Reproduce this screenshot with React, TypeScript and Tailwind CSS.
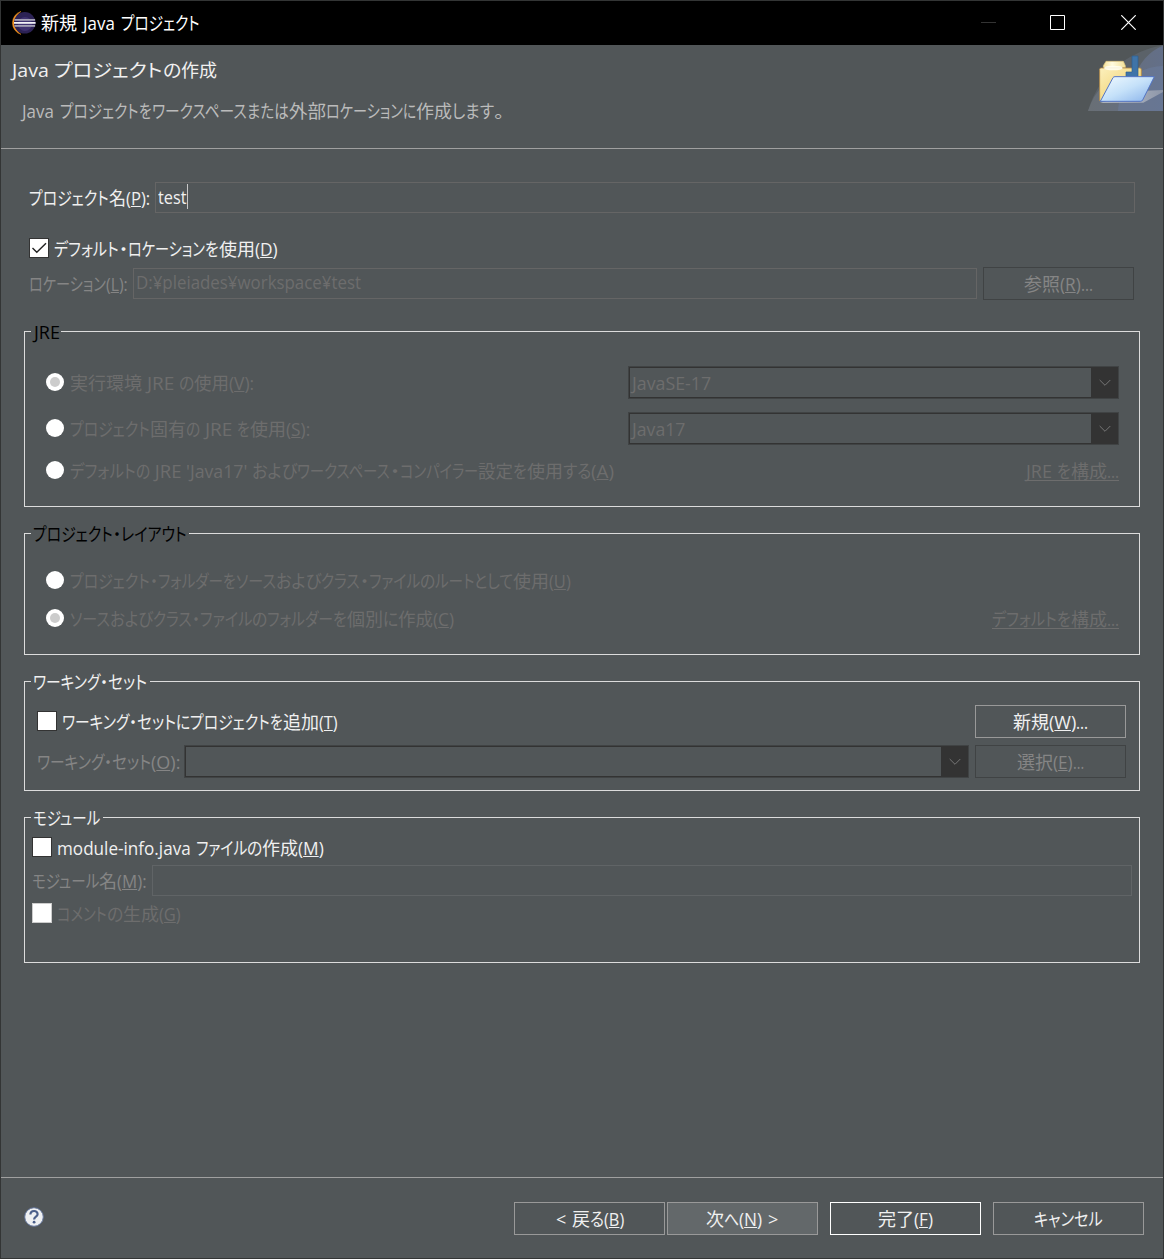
import React, { useLayoutEffect, useRef, useState } from "react";

type Part = [text: string, start: number];

function mnemonic(text: string) {
  const i = text.indexOf("_");
  if (i < 0) return text;
  return (
    <>
      {text.slice(0, i)}
      <span className="underline decoration-1 underline-offset-1">{text[i + 1]}</span>
      {text.slice(i + 2)}
    </>
  );
}

/* One run of glyphs condensed or widened to a given advance. */
function Run({ text, width }: { text: string; width: number }) {
  const ref = useRef<HTMLSpanElement>(null);
  const [scale, setScale] = useState(1);
  useLayoutEffect(() => {
    const measure = () => {
      if (ref.current && ref.current.offsetWidth) setScale(width / ref.current.offsetWidth);
    };
    measure();
    document.fonts?.ready.then(measure);
  }, [width, text]);
  return (
    <span className="inline-block shrink-0" style={{ width }}>
      <span
        ref={ref}
        className="inline-block origin-left whitespace-pre [font-feature-settings:'palt']"
        style={{ transform: `scaleX(${scale})` }}
      >
        {mnemonic(text)}
      </span>
    </span>
  );
}

function Label({ parts, end, className = "" }: { parts: Part[]; end: number; className?: string }) {
  return (
    <span className={`flex shrink-0 items-baseline leading-6 ${className}`}>
      {parts.map(([text, start], i) => (
        <Run key={i} text={text} width={(parts[i + 1]?.[1] ?? end) - start} />
      ))}
    </span>
  );
}

function Group({ title, titleWidth, className, children }: { title: React.ReactNode; titleWidth: string; className: string; children: React.ReactNode }) {
  return (
    <section className={`flex flex-col border-x border-b border-[#dcdcdc] ${className}`}>
      <div className="flex h-px shrink-0 items-start">
        <div className="h-px w-[6px] bg-[#dcdcdc]" />
        <div className={`-mt-[11px] pl-[2px] ${titleWidth}`}>{title}</div>
        <div className="h-px flex-1 bg-[#dcdcdc]" />
      </div>
      {children}
    </section>
  );
}

function Radio({ on, className = "" }: { on?: boolean; className?: string }) {
  return (
    <span className={`ml-px flex size-[18px] shrink-0 items-center justify-center rounded-full bg-white ${className}`}>
      {on && <span className="size-[10px] rounded-full bg-[#cccccc]" />}
    </span>
  );
}

function Checkbox({ on, disabled }: { on?: boolean; disabled?: boolean }) {
  return (
    <span className={`flex size-5 shrink-0 items-center justify-center border bg-white ${disabled ? "border-[#cccccc]" : "border-[#333333]"}`}>
      {on && (
        <svg width="18" height="18" viewBox="0 0 18 18" fill="none" stroke="#222" strokeWidth="1.4">
          <path d="M2.5 9 L6.8 13.3 L16 4.2" />
        </svg>
      )}
    </span>
  );
}

function Combo({ className, children }: { className: string; children?: React.ReactNode }) {
  return (
    <div className={`flex h-[33px] shrink-0 border border-[#404344] ${className}`}>
      <div className="flex flex-1 items-center border border-r-0 border-[#333333] pl-[2px] text-[#6d6d6d]">{children}</div>
      <div className="flex w-[27px] items-center justify-center bg-[#333333]">
        <svg width="12" height="8" viewBox="0 0 12 8" fill="none" stroke="#777" strokeWidth="1">
          <path d="M0.7 1 L6 6.3 L11.3 1" />
        </svg>
      </div>
    </div>
  );
}

function Button({ className, children }: { className: string; children: React.ReactNode }) {
  return <button className={`flex h-[33px] w-[151px] shrink-0 items-center border ${className}`}>{children}</button>;
}

function EclipseLogo() {
  return (
    <svg width="25" height="24" viewBox="0 0 25 24">
      <path d="M10 0.4 A12 12 0 0 0 10 23.4 A14 14 0 0 1 10 0.4Z" fill="#f7941e" stroke="#e08a20" strokeWidth=".5" />
      <circle cx="13.7" cy="11.8" r="10.8" fill="#2c2255" />
      <circle cx="14" cy="13" r="7" fill="#3f3270" />
      <path d="M3.4 8h20.7v1.8H3.4z" fill="#a3a0b4" />
      <path d="M3 11h21.6v1.8H3z" fill="#f2f2f6" />
      <path d="M3.4 14h20.7v1.8H3.4z" fill="#a3a0b4" />
    </svg>
  );
}

function FolderBanner() {
  return (
    <svg width="75" height="66" viewBox="384 135 225 198" className="shrink-0">
      <defs>
        <linearGradient id="tab" x1="0" y1="0" x2="1" y2="0">
          <stop offset="0" stopColor="#f7e39a" />
          <stop offset=".4" stopColor="#fffbe0" />
          <stop offset="1" stopColor="#f4e198" />
        </linearGradient>
        <linearGradient id="back" x1="0" y1="0" x2="1" y2="1">
          <stop offset="0" stopColor="#fcf0bd" />
          <stop offset="1" stopColor="#edc95b" />
        </linearGradient>
        <linearGradient id="front" x1="0" y1="0" x2="1" y2="1">
          <stop offset="0" stopColor="#f2fbff" />
          <stop offset=".5" stopColor="#c5e1f9" />
          <stop offset="1" stopColor="#87b1ea" />
        </linearGradient>
        <linearGradient id="glow" x1="0" y1="0" x2="1" y2="0">
          <stop offset="0" stopColor="#696f75" />
          <stop offset="1" stopColor="#636f88" />
        </linearGradient>
        <linearGradient id="shade" x1="0" y1="0" x2="1" y2="0">
          <stop offset="0" stopColor="#c8ccd4" />
          <stop offset="1" stopColor="#8d96a8" />
        </linearGradient>
      </defs>
      <path d="M384 333 Q410 245 480 190 Q540 148 609 135 V333Z" fill="#5b6269" />
      <path d="M384 333 Q400 285 430 256 L520 235 Q550 160 609 137 V333Z" fill="url(#glow)" />
      <path d="M474 333 Q478 250 535 218 Q570 198 609 198 V333Z" fill="#6c7b9d" fillOpacity=".55" />
      <path d="M420 308 L550 308 L609 276 V270 L560 272Z" fill="url(#shade)" />
      <path d="M430 203 V197 L438 184 H490 L496 197 V203Z" fill="url(#tab)" stroke="#dfc67c" strokeWidth="2" />
      <path d="M419 302 V208 Q419 204 424 204 H540 Q544 204 544 210 V302Z" fill="url(#back)" stroke="#b58a48" strokeWidth="2.5" />
      <ellipse cx="460" cy="204" rx="28" ry="7" fill="#fffef0" fillOpacity=".9" />
      <path d="M516 168 H534 V230 H498 V216 H516Z" fill="#3f74a8" stroke="#2a5d8e" strokeWidth="2" />
      <path d="M421 304 L459 233 Q461 230 465 230 H583 L548 300 Q546 304 541 304Z" fill="url(#front)" stroke="#5375c5" strokeWidth="3" />
    </svg>
  );
}

export default function App() {
  return (
    <div className="flex h-[1259px] w-[1164px] flex-col overflow-hidden border border-[#333535] bg-[#515658] font-['Open_Sans','Noto_Sans_CJK_JP',sans-serif] text-[18px] text-[#f0f0f0]">
      <header className="flex h-11 shrink-0 items-center bg-black pl-[10px] text-white">
        <EclipseLogo />
        <Label className="ml-[5px]" parts={[["新規", 41], [" ", 77], ["Java", 83], [" ", 115], ["プロジェクト", 121]]} end={200} />
        <div className="ml-auto flex items-center pr-[27px]">
          <svg width="15" height="15" viewBox="0 0 15 15" className="-mt-[2px] mr-[54px]"><path d="M0 7.5h15" stroke="#333" /></svg>
          <svg width="15" height="15" viewBox="0 0 15 15" className="-mt-px mr-[56px]"><path d="M.5 .5h14v14h-14z" fill="none" stroke="#fff" /></svg>
          <svg width="15" height="15" viewBox="0 0 15 15" className="-mt-px"><path d="M.3 .3l14.4 14.4M14.7 .3L.3 14.7" stroke="#fff" strokeWidth="1.2" /></svg>
        </div>
      </header>

      <div className="flex h-[104px] shrink-0 justify-between border-b border-[#a0a0a0]">
        <div className="pl-[11px] pt-[13px]">
          <Label parts={[["Java", 12], [" ", 49], ["プロジェクト", 54], ["の", 163], ["作成", 181]]} end={217} />
          <Label
            className="ml-[10px] mt-[17px] text-[#bbbbbb]"
            parts={[["Java", 22], [" ", 54], ["プロジェクト", 60], ["を", 139], ["ワークスペース", 152], ["または", 247], ["外部", 289], ["ロケーション", 326], ["に", 403], ["作成", 416], ["します", 452], ["。", 494]]}
            end={504}
          />
        </div>
        <FolderBanner />
      </div>

      <main className="flex flex-1 flex-col pl-[23px] pr-[23px] pt-[33px]">
        <div className="flex h-[31px] shrink-0 items-center pl-[5px] pr-[5px]">
          <Label parts={[["プロジェクト", 29], ["名", 109], ["(_P):", 126]]} end={150} />
          <div className="ml-[5px] flex h-[31px] flex-1 items-center border border-[#656565] pl-[2px]">
            <Label className="-mt-[1px]" parts={[["test", 158]]} end={187} />
            <span className="-mt-[3px] h-[25px] w-px bg-[#c8c8c8]" />
          </div>
        </div>

        <div className="mt-[25px] flex h-5 shrink-0 items-center pl-[5px]">
          <Checkbox on />
          <Label className="ml-[5px] pt-[2px]" parts={[["デフォルト", 54], ["・", 119], ["ロケーション", 128], ["を", 205], ["使用", 219], ["(_D)", 255]]} end={278} />
        </div>

        <div className="mt-[9px] flex h-[33px] shrink-0 items-center pl-[5px] pr-[6px]">
          <Label className="text-[#858585]" parts={[["ロケーション", 29], ["(_L):", 106]]} end={128} />
          <div className="ml-[5px] flex h-[31px] flex-1 items-center border border-[#656565] pl-[2px] text-[#6d6d6d]">
            <Label className="-mt-[3px]" parts={[["D:¥pleiades¥workspace¥test", 136]]} end={361} />
          </div>
          <Button className="ml-[6px] border-[#404344] pl-[40px] text-[#858585]">
            <Label parts={[["参照", 1024], ["(_R)", 1060], ["...", 1081]]} end={1093} />
          </Button>
        </div>

        <Group className="mt-[31px] h-[176px]" titleWidth="w-[30px] text-black" title={<Label className="ml-px" parts={[["JRE", 34]]} end={60} />}>
          <div className="flex flex-col pl-[20px] pr-[20px] pt-[34px] text-[#6d6d6d]">
            <div className="flex h-[33px] items-center">
              <Radio on className="-mt-px" />
              <Label className="ml-[6px]" parts={[["実行環境", 70], [" JRE ", 142], ["の", 179], ["使用", 194], ["(_V):", 229]]} end={254} />
              <Combo className="ml-auto w-[491px]">
                <Label parts={[["JavaSE-17", 632]]} end={711} />
              </Combo>
            </div>
            <div className="mt-[13px] flex h-[33px] items-center">
              <Radio className="-mt-px" />
              <Label className="ml-[6px]" parts={[["プロジェクト", 70], ["固有", 150], ["の", 186], [" JRE ", 200], ["を", 237], ["使用", 250], ["(_S):", 286]]} end={310} />
              <Combo className="ml-auto w-[491px]">
                <Label parts={[["Java17", 632]]} end={685} />
              </Combo>
            </div>
            <div className="mt-[13px] flex h-6 items-center">
              <Radio />
              <Label
                className="ml-[6px] pt-[2px]"
                parts={[["デフォルト", 70], ["の", 136], [" JRE ", 150], ["'Java17' ", 186], ["および", 252], ["ワークスペース", 297], ["・", 390], ["コンパイラー", 400], ["設定", 478], ["を", 513], ["使用", 527], ["する", 563], ["(_A)", 591]]}
                end={614}
              />
              <Label className="ml-auto h-[22px] border-b border-[#6d6d6d] !leading-[25px]" parts={[["JRE", 1026], [" ", 1052], ["を", 1057], ["構成", 1071], ["...", 1107]]} end={1119} />
            </div>
          </div>
        </Group>

        <Group className="mt-[26px] h-[122px]" titleWidth="w-[158px] text-black" title={<Label parts={[["プロジェクト", 33], ["・", 113], ["レイアウト", 121]]} end={187} />}>
          <div className="flex flex-col pl-[20px] pr-[20px] pt-[34px] text-[#6d6d6d]">
            <div className="flex h-6 items-center">
              <Radio />
              <Label
                className="ml-[6px] pt-[2px]"
                parts={[["プロジェクト", 70], ["・", 150], ["フォルダー", 158], ["を", 223], ["ソース", 236], ["および", 276], ["クラス", 321], ["・", 360], ["ファイル", 369], ["の", 420], ["ルート", 435], ["として", 474], ["使用", 513], ["(_U)", 549]]}
                end={571}
              />
            </div>
            <div className="mt-[14px] flex h-6 items-center">
              <Radio on />
              <Label
                className="ml-[6px] pt-[2px]"
                parts={[["ソース", 70], ["および", 110], ["クラス", 153], ["・", 192], ["ファイル", 200], ["の", 252], ["フォルダー", 267], ["を", 333], ["個別", 347], ["に", 383], ["作成", 398], ["(_C)", 433]]}
                end={454}
              />
              <Label className="ml-auto h-[22px] border-b border-[#6d6d6d] !leading-[25px]" parts={[["デフォルト", 992], ["を", 1057], ["構成", 1071], ["...", 1107]]} end={1119} />
            </div>
          </div>
        </Group>

        <Group className="mt-[26px] h-[110px]" titleWidth="w-[119px]" title={<Label parts={[["ワーキング", 33], ["・", 100], ["セット", 108]]} end={147} />}>
          <div className="flex flex-col pl-[12px] pr-[13px] pt-[23px]">
            <div className="flex h-[33px] items-center">
              <div className="flex flex-1 items-center">
                <span className="-mt-[1px] flex"><Checkbox /></span>
                <Label className="ml-[5px]" parts={[["ワーキング", 62], ["・", 129], ["セット", 137], ["に", 176], ["プロジェクト", 190], ["を", 270], ["追加", 283], ["(_T)", 319]]} end={338} />
              </div>
              <Button className="border-[#999999] pl-[37px]">
                <Label parts={[["新規", 1013], ["(_W)", 1049], ["...", 1076]]} end={1088} />
              </Button>
            </div>
            <div className="mt-[7px] flex h-[33px] items-center">
              <Label className="text-[#858585]" parts={[["ワーキング", 37], ["・", 104], ["セット", 112], ["(_O):", 151]]} end={180} />
              <Combo className="ml-1 flex-1" />
              <Button className="ml-[6px] border-[#404344] pl-[41px] text-[#858585]">
                <Label parts={[["選択", 1017], ["(_E)", 1053], ["...", 1073]]} end={1084} />
              </Button>
            </div>
          </div>
        </Group>

        <Group className="mt-[26px] h-[146px]" titleWidth="w-[72px]" title={<Label parts={[["モジュール", 33]]} end={100} />}>
          <div className="flex flex-col pl-[7px] pr-[7px] pt-[19px]">
            <div className="flex h-5 items-center">
              <Checkbox />
              <Label className="ml-[5px] pt-[2px]" parts={[["module-info.java", 57], [" ", 191], ["ファイル", 196], ["の", 247], ["作成", 262], ["(_M)", 298]]} end={324} />
            </div>
            <div className="mt-2 flex h-[31px] items-center text-[#858585]">
              <Label parts={[["モジュール", 32], ["名", 99], ["(_M):", 117]]} end={147} />
              <div className="ml-[5px] h-[31px] flex-1 border border-[#606466]" />
            </div>
            <div className="mt-[7px] flex h-5 items-center text-[#6d6d6d]">
              <Checkbox disabled />
              <Label className="ml-[5px] pt-[2px]" parts={[["コメント", 57], ["の", 107], ["生成", 123], ["(_G)", 159]]} end={181} />
            </div>
          </div>
        </Group>
      </main>

      <footer className="flex h-[81px] shrink-0 items-start border-t border-[#a0a0a0] pl-[23px] pr-[19px] pt-[24px]">
        <svg width="20" height="20" viewBox="0 0 20 20" className="mt-[5px]">
          <circle cx="10" cy="10" r="9.3" fill="#eef0f2" stroke="#61739a" strokeWidth="1" />
          <path d="M6.4 7.6 C6.4 2.8 13.8 3 13.6 7.2 C13.5 9.6 10.1 9.6 10.1 12.4" fill="none" stroke="#4b5f8a" strokeWidth="2.2" />
          <circle cx="10.1" cy="15.2" r="1.4" fill="#4b5f8a" />
        </svg>
        <Button className="ml-auto border-[#999999] pl-[41px]">
          <Label parts={[["<", 556], [" ", 566], ["戻", 572], ["る", 590], ["(_B)", 604]]} end={624} />
        </Button>
        <Button className="ml-[2px] border-[#999999] bg-[#63686a] pl-[38px]">
          <Label parts={[["次", 706], ["へ", 724], ["(_N)", 739], [" ", 762], [">", 768]]} end={778} />
        </Button>
        <Button className="ml-3 border-white pl-[47px]">
          <Label parts={[["完了", 878], ["(_F)", 914]]} end={933} />
        </Button>
        <Button className="ml-3 border-[#999999] pl-[40px]">
          <Label parts={[["キャンセル", 1034]]} end={1103} />
        </Button>
      </footer>
    </div>
  );
}
